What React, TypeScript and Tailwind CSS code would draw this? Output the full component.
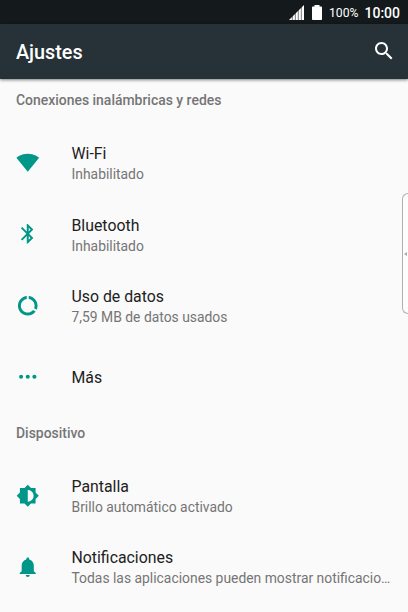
import type { ReactNode } from 'react'

type Item = { title: string; summary?: string; icon: ReactNode }

const NETWORK_ITEMS: Item[] = [
  {
    title: 'Wi-Fi',
    summary: 'Inhabilitado',
    icon: <path d="M12 21.2L23.6 6.8C23.1 6.4 18.7 2.8 12 2.8S.9 6.4.4 6.8z" />,
  },
  {
    title: 'Bluetooth',
    summary: 'Inhabilitado',
    icon: (
      <path d="M17.71 7.71L12 2h-1v7.59L6.41 5 5 6.41 10.59 12 5 17.59 6.41 19 11 14.41V22h1l5.71-5.71-4.3-4.29 4.3-4.29zM13 5.83l1.88 1.88L13 9.59V5.83zm1.88 10.46L13 18.17v-3.76l1.88 1.88z" />
    ),
  },
  {
    title: 'Uso de datos',
    summary: '7,59 MB de datos usados',
    icon: (
      <path d="M13 2.05v3.03c3.39.49 6 3.39 6 6.92 0 .9-.18 1.75-.48 2.54l2.6 1.53c.56-1.24.88-2.62.88-4.07 0-5.18-3.95-9.45-9-9.95zM12 19c-3.87 0-7-3.13-7-7 0-3.53 2.61-6.43 6-6.92V2.05c-5.06.5-9 4.76-9 9.95 0 5.52 4.47 10 9.99 10 3.31 0 6.24-1.61 8.06-4.09l-2.6-1.53C16.17 17.98 14.21 19 12 19z" />
    ),
  },
  {
    title: 'Más',
    icon: (
      <>
        <circle cx="5.2" cy="12" r="2.1" />
        <circle cx="12" cy="12" r="2.1" />
        <circle cx="18.8" cy="12" r="2.1" />
      </>
    ),
  },
]

const DEVICE_ITEMS: Item[] = [
  {
    title: 'Pantalla',
    summary: 'Brillo automático activado',
    icon: (
      <path d="M20 15.31L23.31 12 20 8.69V4h-4.69L12 .69 8.69 4H4v4.69L.69 12 4 15.31V20h4.69L12 23.31 15.31 20H20v-4.69zM12 18V6c3.31 0 6 2.69 6 6s-2.69 6-6 6z" />
    ),
  },
  {
    title: 'Notificaciones',
    summary: 'Todas las aplicaciones pueden mostrar notificacio…',
    icon: (
      <path d="M12 22.500c1.100 0 2-.9 2-2h-4c0 1.100.9 2 2 2zm6.200-6v-5.500c0-3.070-1.930-5.640-4.700-6.320V4c0-.83-.67-1.500-1.500-1.500s-1.500.67-1.500 1.500v.68C7.730 5.360 5.800 7.930 5.800 11v5.500l-2 2v1h16.400v-1l-2-2z" />
    ),
  },
]

function StatusBar() {
  return (
    <div className="flex h-6 shrink-0 items-center justify-end bg-[#14191c] pr-2 text-white">
      <svg viewBox="0 0 15 15" className="mr-2 h-[15px] w-[15px]">
        <path d="M0 15L15 0V15z" fill="#fff" />
        <path d="M3.3 15V11M6.3 15V8M9.3 15V5M12.3 15V2" stroke="#14191c" strokeWidth="0.6" />
      </svg>
      <svg viewBox="0 0 10 15" className="mr-[7px] h-[15px] w-[10px]" fill="#fff">
        <path d="M2.5 0h5v1.5h1.7q.8 0 .8.8v11.900q0 .8-.8.8H.8q-.8 0-.8-.8V2.300q0-.8.8-.8h1.700z" />
      </svg>
      <span className="mr-[6px] pt-[2px] text-[12.2px]">100%</span>
      <span className="pt-[2px] text-[14px] font-medium">10:00</span>
    </div>
  )
}

function SectionHeader({ label }: { label: string }) {
  return <h2 className="h-[47px] pt-[11px] text-[13.95px] leading-5 font-medium text-[#757575]">{label}</h2>
}

function Row({ item }: { item: Item }) {
  return (
    <div className="flex h-[71.4px] items-center pt-[2px]">
      <svg viewBox="0 0 24 24" className="mr-8 h-[23.5px] w-[23.5px] shrink-0" fill="#009688">
        {item.icon}
      </svg>
      <div className="min-w-0 flex-1 pt-[2px]">
        <div className="text-[15.85px] leading-[21px] text-[#212121]">{item.title}</div>
        {item.summary && (
          <div className="text-[13.88px] leading-5 whitespace-nowrap text-[#757575]">{item.summary}</div>
        )}
      </div>
    </div>
  )
}

export default function App() {
  return (
    <div className="relative flex h-[612px] w-[408px] flex-col overflow-hidden bg-[#fafafa] font-[Roboto,sans-serif]">
      <StatusBar />
      <header className="flex h-[55px] shrink-0 items-center justify-between bg-[#263238] pr-3 pl-4 shadow-[0_1px_3px_rgba(0,0,0,0.5)]">
        <h1 className="pt-[3px] text-[19.8px] font-medium text-white">Ajustes</h1>
        <svg viewBox="0 0 24 24" className="mb-[2px] h-6 w-6" fill="#fff">
          <path d="M15.5 14h-.79l-.28-.27C15.41 12.59 16 11.11 16 9.5 16 5.91 13.09 3 9.5 3S3 5.91 3 9.5 5.91 16 9.5 16c1.61 0 3.09-.59 4.23-1.57l.27.28v.79l5 4.99L20.49 19l-4.99-5zm-6 0C7.01 14 5 11.99 5 9.5S7.01 5 9.5 5 14 7.01 14 9.5 11.99 14 9.5 14z" />
        </svg>
      </header>

      <main className="px-4">
        <SectionHeader label="Conexiones inalámbricas y redes" />
        {NETWORK_ITEMS.map(item => (
          <Row key={item.title} item={item} />
        ))}
        <SectionHeader label="Dispositivo" />
        {DEVICE_ITEMS.map(item => (
          <Row key={item.title} item={item} />
        ))}
      </main>

      {/* Edge panel handle */}
      <div className="absolute top-[193px] right-0 flex h-[121px] w-[6px] items-center justify-end rounded-l-[6px] border border-r-0 border-[#b0b0b0] bg-[#fdfdfd]">
        <svg viewBox="0 0 4 4" className="h-1 w-1" fill="#aaa">
          <path d="M0 2L3 0V4z" />
        </svg>
      </div>
    </div>
  )
}
